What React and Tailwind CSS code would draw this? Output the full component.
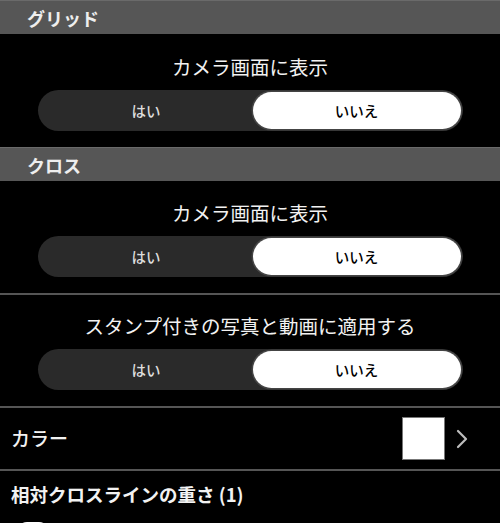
import React, { useState } from "react";

const jp = { fontFamily: '"Noto Sans CJK JP", "Noto Sans", sans-serif' };

const SectionHeader = ({ title }) => (
  <div className="h-[34px] bg-[#565656] border-t border-[#6a6a6a] flex items-center pl-[27px]">
    <span className="text-[18px] font-bold text-[#eeeeee] leading-none">{title}</span>
  </div>
);

const YesNo = ({ label, pt = "pt-5" }) => {
  const [value, setValue] = useState(false);
  return (
    <div className={`${pt} pb-4 flex flex-col items-center`}>
      <p className="text-[19.5px] leading-[24px] text-[#f2f2f2]">{label}</p>
      <div className="mt-[11px] w-[425px] h-[41px] rounded-full bg-[#2a2a2a] p-[2px] flex">
        <button
          onClick={() => setValue(true)}
          className={`flex-1 rounded-full text-[14.5px] font-medium ${
            value ? "bg-white text-black shadow-[0_0_0_1.5px_#444]" : "text-[#dddddd]"
          }`}
        >
          はい
        </button>
        <button
          onClick={() => setValue(false)}
          className={`w-[208px] rounded-full text-[14.5px] font-medium ${
            !value ? "bg-white text-black shadow-[0_0_0_1.5px_#444]" : "text-[#dddddd]"
          }`}
        >
          いいえ
        </button>
      </div>
    </div>
  );
};

const Divider = () => <div className="h-[2px] bg-[#555555]" />;

export default function App() {
  return (
    <div className="w-[500px] h-[523px] overflow-hidden bg-black text-white" style={jp}>
      <SectionHeader title="グリッド" />
      <YesNo label="カメラ画面に表示" pt="pt-[21px]" />

      <SectionHeader title="クロス" />
      <YesNo label="カメラ画面に表示" />
      <Divider />
      <YesNo label="スタンプ付きの写真と動画に適用する" pt="pt-[19px]" />
      <Divider />

      {/* Colour row */}
      <div className="h-[61px] flex items-center pl-[11px] pr-[32px]">
        <span className="text-[19px] font-medium text-[#f2f2f2]">カラー</span>
        <div className="ml-auto flex items-center gap-[11px]">
          <div className="w-[43px] h-[43px] bg-white border border-[#777]" />
          <svg width="12" height="20" viewBox="0 0 12 20" fill="none">
            <path d="M2 2 L10 10 L2 18" stroke="#bdbdbd" strokeWidth="2.2" strokeLinecap="round" strokeLinejoin="round" />
          </svg>
        </div>
      </div>
      <Divider />

      <div className="pl-[11px] pt-[11px]">
        <p className="text-[18.5px] font-bold leading-[24px] text-[#f2f2f2]">相対クロスラインの重さ (1)</p>
        <div className="mt-[16px] ml-[6px] w-[32px] h-[20px] rounded-full bg-white" />
      </div>
    </div>
  );
}
